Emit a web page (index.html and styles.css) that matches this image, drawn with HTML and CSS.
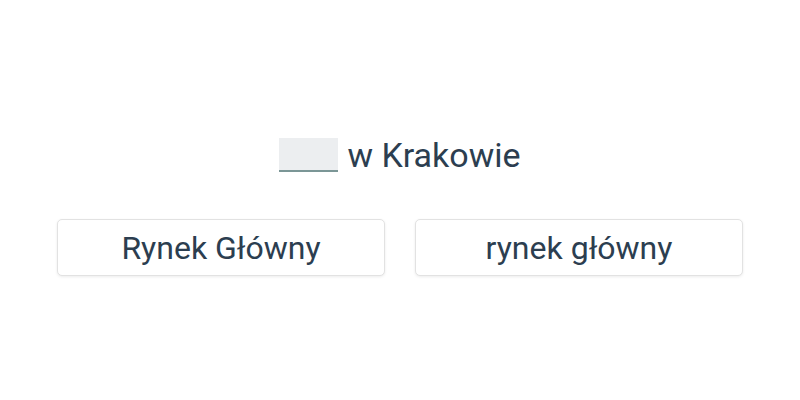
FILE: index.html
```html
<!DOCTYPE html>
<html lang="pl">
  <head>
    <meta charset="UTF-8" />
    <title>Quiz</title>
    <link rel="stylesheet" href="styles.css">
  </head>
  <body>
    <div class="quiz">
      <div class="question">
        <span class="blank"></span>
        <span class="rest">w Krakowie</span>
      </div>
      <div class="answers">
        <button class="answer">Rynek Główny</button>
        <button class="answer">rynek główny</button>
      </div>
    </div>
  </body>
</html>
```

FILE: styles.css
```css
* {
  margin: 0;
  padding: 0;
  box-sizing: border-box;
}
body {
  width: 800px;
  height: 400px;
  background-color: #fff;
  font-family: Roboto, "Noto Sans", sans-serif;
  color: #2c3e50;
}
.quiz {
  padding-top: 138px;
}
.question {
  display: flex;
  justify-content: center;
  align-items: flex-end;
  gap: 9px;
  font-size: 34px;
  height: 34px;
}
.blank {
  display: inline-block;
  width: 59px;
  height: 34px;
  background-color: #eceef0;
  border-bottom: 2px solid #7b9696;
}
.rest {
  line-height: 34px;
}
.answers {
  display: flex;
  justify-content: center;
  gap: 30px;
  margin-top: 47px;
}
.answer {
  width: 328px;
  height: 57px;
  background-color: #fff;
  border: 1px solid #e2e2e2;
  border-radius: 5px;
  box-shadow: 0 1px 3px rgba(0, 0, 0, 0.08);
  font-family: Roboto, "Noto Sans", sans-serif;
  font-size: 32px;
  color: #2c3e50;
}
```
